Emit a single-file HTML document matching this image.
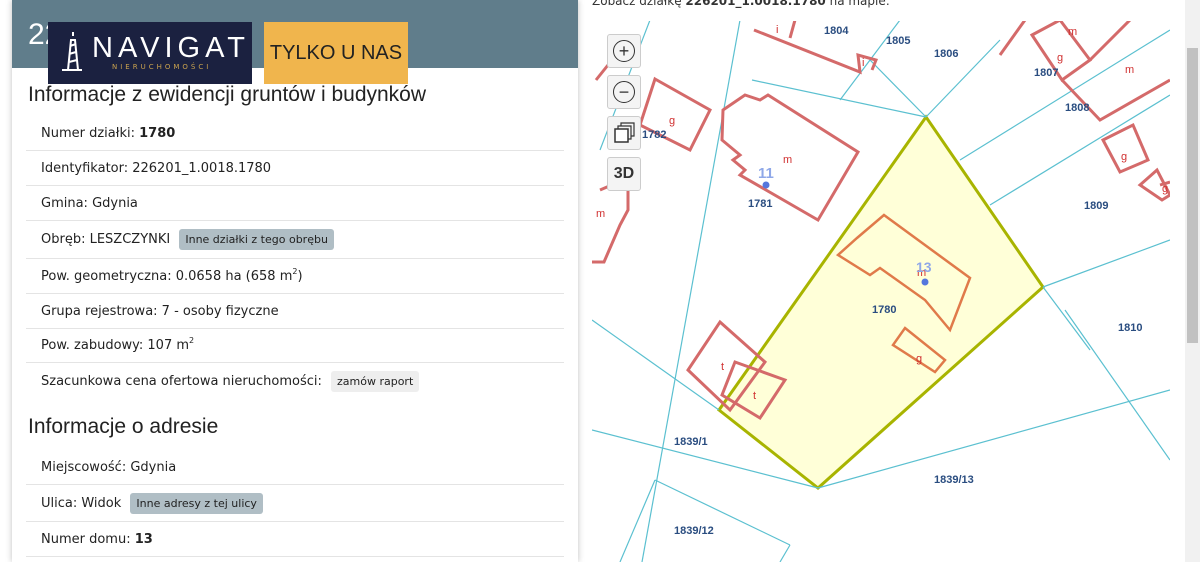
<!DOCTYPE html>
<html><head><meta charset="utf-8"><style>
*{margin:0;padding:0;box-sizing:border-box}
body{width:1200px;height:562px;overflow:hidden;background:#fff;font-family:"DejaVu Sans","Liberation Sans",sans-serif;position:relative}
.card{position:absolute;left:12px;top:0;width:566px;height:562px;background:#fff;box-shadow:0 0 6px rgba(0,0,0,.25)}
.hdr{height:68px;background:#607d8b;color:#fff;font-size:30px;padding:18px 16px;font-family:"Liberation Sans",sans-serif}
h2{position:absolute;left:16px;font-weight:normal;font-size:21px;color:#222;font-family:"Liberation Sans",sans-serif}
.row{position:absolute;left:14px;width:538px;border-bottom:1px solid #e4e4e4;font-size:13px;color:#222;padding-left:15px;display:flex;align-items:center;white-space:pre}
.btn{display:inline-block;background:#b0bec5;border-radius:3px;font-size:11px;padding:4px 6px;margin-left:5px;color:#222}
.btn.g{background:#eee}
.sp{font-size:8px;position:relative;top:-5px}
.logo{position:absolute;left:48px;top:22px;width:204px;height:62px;background:#1b2140;color:#fff}
.tylko{position:absolute;left:264px;top:22px;width:144px;height:62px;background:#f0b54d;color:#222;font-family:"Liberation Sans",sans-serif;font-size:20px;display:flex;align-items:center;justify-content:center}
.ctl{position:absolute;left:607px;width:34px;height:34px;background:#f4f4f4;border:1px solid #ccc;border-radius:3px;display:flex;align-items:center;justify-content:center;font-size:16px;color:#333;font-family:"Liberation Sans",sans-serif;font-weight:bold}
</style></head><body>
<div class="card">
<div class="hdr">22</div>
<h2 style="top:83px">Informacje z ewidencji gruntów i budynków</h2>
<div class="row" style="top:116px;height:35px">Numer działki: <b>1780</b></div>
<div class="row" style="top:151px;height:35px">Identyfikator: 226201_1.0018.1780</div>
<div class="row" style="top:186px;height:35px">Gmina: Gdynia</div>
<div class="row" style="top:221px;height:38px">Obręb: LESZCZYNKI <span class="btn">Inne działki z tego obrębu</span></div>
<div class="row" style="top:259px;height:35px">Pow. geometryczna: 0.0658 ha (658 m<span class="sp">2</span>)</div>
<div class="row" style="top:294px;height:35px">Grupa rejestrowa: 7 - osoby fizyczne</div>
<div class="row" style="top:329px;height:34px">Pow. zabudowy: 107 m<span class="sp">2</span></div>
<div class="row" style="top:363px;height:36px;border:none">Szacunkowa cena ofertowa nieruchomości: <span class="btn g">zamów raport</span></div>
<h2 style="top:415px">Informacje o adresie</h2>
<div class="row" style="top:450px;height:35px">Miejscowość: Gdynia</div>
<div class="row" style="top:485px;height:37px">Ulica: Widok <span class="btn">Inne adresy z tej ulicy</span></div>
<div class="row" style="top:522px;height:35px">Numer domu: <b>13</b></div>
</div>
<div class="logo">
<svg width="204" height="62"><path d="M14 48h20M20 48l3-30h4l3 30M22 24l6-2M21 32l7-2M21 40l8-2M25 14l0-4" stroke="#fff" stroke-width="2" fill="none"/></svg>
<div style="position:absolute;left:44px;top:10px;font-size:29px;letter-spacing:5px;font-family:'Liberation Sans',sans-serif">NAVIGAT</div>
<div style="position:absolute;left:64px;top:41px;font-size:7px;letter-spacing:3px;color:#c9a24e">NIERUCHOMOŚCI</div>
</div>
<div class="tylko">TYLKO U NAS</div>
<div style="position:absolute;left:592px;top:-6px;font-size:12px;color:#333">Zobacz działkę <b>226201_1.0018.1780</b> na mapie:</div>
<svg style="position:absolute;left:0;top:0" width="1200" height="562">
<defs><clipPath id="c"><rect x="592" y="21" width="578" height="541"/></clipPath></defs>
<g clip-path="url(#c)" fill="none">
<polygon points="926,117 1043,287 818,488 719,410" fill="#ffffd8" stroke="#a8b400" stroke-width="3"/>
<g stroke="#5bc0d0" stroke-width="1.2">
<line x1="752" y1="80" x2="926" y2="117"/><line x1="926" y1="117" x2="1000" y2="40"/>
<line x1="740" y1="20" x2="642" y2="562"/><line x1="650" y1="20" x2="600" y2="150"/>
<line x1="900" y1="20" x2="840" y2="100"/><line x1="960" y1="160" x2="1170" y2="30"/>
<line x1="990" y1="205" x2="1170" y2="95"/><line x1="1043" y1="287" x2="1170" y2="240"/>
<line x1="1065" y1="310" x2="1170" y2="460"/><line x1="1043" y1="287" x2="1090" y2="350"/>
<line x1="592" y1="320" x2="719" y2="410"/><line x1="592" y1="430" x2="818" y2="488"/>
<line x1="818" y1="488" x2="1170" y2="390"/><line x1="655" y1="480" x2="620" y2="562"/>
<line x1="655" y1="480" x2="790" y2="545"/><line x1="790" y1="545" x2="780" y2="562"/>
<line x1="926" y1="117" x2="870" y2="60"/>
</g>
<g stroke="#d46a6a" stroke-width="3">
<polygon points="723,110 745,95 760,100 768,95 858,152 818,220 740,175 745,170 733,160 740,155 722,140"/>
<polygon points="655,79 710,110 690,150 640,125"/>
<polyline points="754,30 860,72 858,55 876,60 872,70"/><line x1="795" y1="20" x2="790" y2="38"/>
<polyline points="1000,55 1025,20"/><polygon points="1032,35 1060,20 1090,60 1062,80"/>
<polyline points="1062,80 1100,120 1170,80"/><polyline points="1090,60 1130,20"/>
<polygon points="1103,140 1133,125 1148,160 1120,172"/>
<polyline points="1160,185 1170,182"/><polygon points="1140,185 1157,170 1170,195 1162,200"/>
<polygon points="720,322 765,362 730,410 688,370"/><polygon points="735,362 785,380 760,418 722,395"/>
<polyline points="600,190 628,178 628,210 620,225 604,262 592,262"/>
<polyline points="596,80 608,65"/>
</g>
<g stroke="#e07a4a" stroke-width="2.5">
<polygon points="884,215 970,278 950,330 925,300 880,268 870,275 838,255 857,238"/>
<polygon points="905,328 945,360 935,372 893,345"/>
</g>
<g font-family="Liberation Sans,sans-serif" font-size="11" font-weight="bold" fill="#2a4d80">
<text x="824" y="34">1804</text><text x="886" y="44">1805</text><text x="934" y="57">1806</text><text x="1034" y="76">1807</text><text x="1065" y="111">1808</text><text x="1084" y="209">1809</text><text x="1118" y="331">1810</text><text x="642" y="138">1782</text><text x="748" y="207">1781</text><text x="872" y="313">1780</text><text x="674" y="445">1839/1</text><text x="934" y="483">1839/13</text><text x="674" y="534">1839/12</text>
</g>
<g font-family="Liberation Sans,sans-serif" font-size="11" fill="#d03030">
<text x="783" y="163">m</text><text x="669" y="124">g</text><text x="1125" y="73">m</text><text x="1068" y="35">m</text><text x="1057" y="61">g</text><text x="1121" y="160">g</text><text x="1162" y="192">g</text><text x="596" y="217">m</text><text x="721" y="370">t</text><text x="753" y="399">t</text><text x="916" y="362">g</text><text x="917" y="276">m</text><text x="776" y="33">i</text><text x="862" y="66">i</text>
</g>
<text x="758" y="178" font-family="Liberation Sans" font-size="15" font-weight="bold" fill="#8fa8e8">11</text>
<text x="916" y="272" font-family="Liberation Sans" font-size="14" font-weight="bold" fill="#8fa8e8">13</text>
<circle cx="766" cy="185" r="3.5" fill="#5577dd"/><circle cx="925" cy="282" r="3.5" fill="#5577dd"/>
</g>
</svg>
<div class="ctl" style="top:34px;font-weight:normal;font-size:22px"><span style="border:1.5px solid #333;border-radius:50%;width:22px;height:22px;display:flex;align-items:center;justify-content:center;font-size:18px">+</span></div>
<div class="ctl" style="top:75px;font-weight:normal"><span style="border:1.5px solid #333;border-radius:50%;width:22px;height:22px;display:flex;align-items:center;justify-content:center;font-size:18px">−</span></div>
<div class="ctl" style="top:116px"><svg width="24" height="24"><rect x="3" y="8" width="13" height="13" fill="#fff" stroke="#333" stroke-width="1.5"/><path d="M6 8V5h13v13h-3M9 5V2h13v13h-3" fill="none" stroke="#333" stroke-width="1.2"/></svg></div>
<div class="ctl" style="top:157px">3D</div>
<div style="position:absolute;left:1185px;top:0;width:15px;height:562px;background:#f1f1f1"></div>
<div style="position:absolute;left:1187px;top:48px;width:11px;height:295px;background:#c1c1c1"></div>
</body></html>
